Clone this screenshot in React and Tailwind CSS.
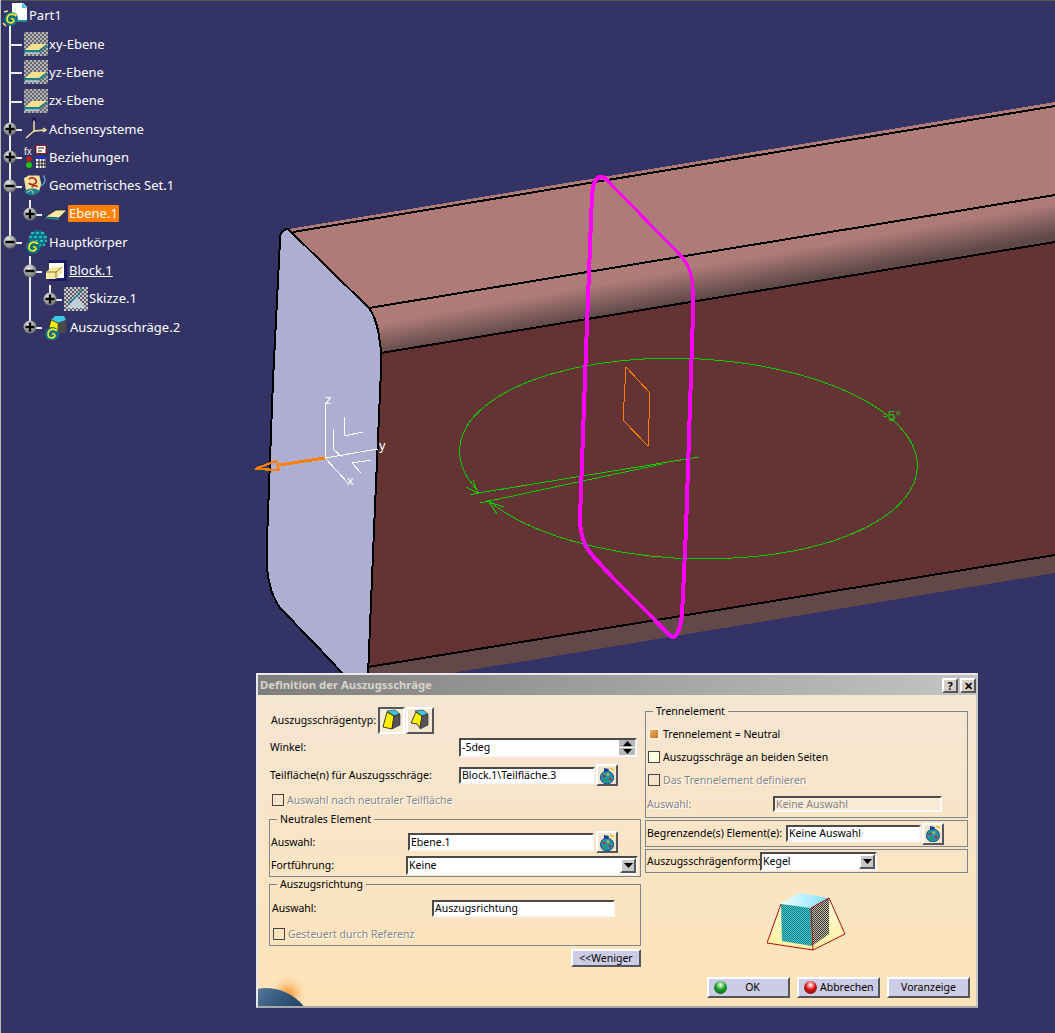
import React from 'react';

const Checker = ({ id, a = '#ffffff', b = '#777777', size = 2 }) => (
  <pattern id={id} width={size * 2} height={size * 2} patternUnits="userSpaceOnUse">
    <rect width={size * 2} height={size * 2} fill={a} />
    <rect width={size} height={size} fill={b} />
    <rect x={size} y={size} width={size} height={size} fill={b} />
  </pattern>
);

const Spiral = ({ x = 0, y = 0 }) => (
  <g transform={`translate(${x} ${y})`}>
    <circle cx="8" cy="8" r="7" fill="#0a6f80" />
    <path d="M8 8 a2 2 0 0 1 3 2 a4 4 0 0 1 -6 1 a5 5 0 0 1 1 -7 a6 6 0 0 1 7 1" fill="none" stroke="#ffee22" strokeWidth="1.6" />
  </g>
);

const Sphere = ({ minus }) => (
  <svg width="14" height="14" viewBox="0 0 14 14" className="absolute left-[3px] top-1/2 -translate-y-1/2">
    <defs>
      <radialGradient id="sph" cx="0.4" cy="0.3" r="0.8">
        <stop offset="0" stopColor="#e8e8e8" />
        <stop offset="1" stopColor="#5c5c5c" />
      </radialGradient>
    </defs>
    <circle cx="7" cy="7" r="6.5" fill="url(#sph)" />
    <rect x="2.5" y="5.8" width="9" height="2.4" fill="#000" />
    {!minus && <rect x="5.8" y="2.5" width="2.4" height="9" fill="#000" />}
  </svg>
);

const PlaneIcon = () => (
  <svg width="24" height="24" viewBox="0 0 24 24">
    <defs><Checker id="chk" a="#b4b4b8" b="#66666e" /></defs>
    <rect width="24" height="24" fill="url(#chk)" />
    <path d="M1 18 L8 12 L23 12 L15 18 Z" fill="#f2e08a" />
    <path d="M0 18 L15 18 L23 12 L23 14 L15 21 L0 21 Z" fill="#1d7f8c" />
    <path d="M1 21 L15 21" stroke="#eee" />
  </svg>
);

const AxisIcon = () => (
  <svg width="22" height="24" viewBox="0 0 22 24" fill="none" stroke="#f5e6a0" strokeWidth="1.5">
    <path d="M9 3 L9 14 L1 21" />
    <path d="M9 14 L20 13" />
    <path d="M7 5 L9 1 L11 5" stroke="#14145a" />
    <path d="M18 11 L21 13 L18 15" stroke="#f5e6a0" />
  </svg>
);

const RelationIcon = () => (
  <svg width="24" height="24" viewBox="0 0 24 24">
    <text x="0" y="10" fontSize="10" fontFamily="Liberation Sans, sans-serif" fill="#eeeeee">fx</text>
    <rect x="12" y="0.5" width="10" height="8" fill="#fff" stroke="#a01010" />
    <path d="M14 3 H20 M14 6 H18" stroke="#222" />
    <circle cx="5" cy="14" r="2.5" fill="#d81818" />
    <circle cx="5" cy="20" r="3" fill="#18c818" />
    <rect x="12" y="11" width="10" height="12" fill="#fff" />
    <rect x="12" y="11" width="10" height="3" fill="#2030c0" />
    <path d="M12 17 H22 M12 20 H22 M15 14 V23 M18 14 V23 M21 14 V23" stroke="#111" />
  </svg>
);

const GeoSetIcon = () => (
  <svg width="26" height="24" viewBox="0 0 26 24">
    <path d="M1 4 L6 1 L17 1 L19 10 L17 17 L10 19 L3 16 Z" fill="#f5e29c" />
    <path d="M6 5 C9 2 14 4 14 8 C12 11 8 11 6 9 M9 13 C11 11 14 11 15 13" fill="none" stroke="#b01818" strokeWidth="1.5" />
    <path d="M1 18 C6 13 13 14 18 17 C15 22 6 24 1 18 Z" fill="#1a7f90" />
    <path d="M4 19 C8 15 12 17 10 20" fill="none" stroke="#f5e29c" />
    <path d="M21 1 C25 6 22 10 19 12" fill="none" stroke="#50b8e8" strokeWidth="1.2" />
  </svg>
);

const SmallPlaneIcon = () => (
  <svg width="24" height="14" viewBox="0 0 24 14">
    <path d="M1 10 L12 3 L23 3 L15 11 Z" fill="#f8e8a8" stroke="#111" strokeWidth="0.7" />
    <path d="M1 10 L15 11 L15 13 L2 12 Z" fill="#1d7f8c" />
  </svg>
);

const BodyIcon = () => (
  <svg width="24" height="25" viewBox="0 0 24 25">
    <circle cx="14" cy="9" r="9" fill="#0a6f80" />
    <path d="M7 3 L21 3 M5 7 L23 7 M6 11 L23 11 M9 15 L21 15" stroke="#39d0e0" strokeWidth="1.6" strokeDasharray="3 2" />
    <Spiral x="1" y="9" />
  </svg>
);

const BlockIcon = () => (
  <svg width="22" height="22" viewBox="0 0 22 22">
    <rect x="4" width="18" height="21" fill="#fff" />
    <rect x="4" width="18" height="3" fill="#1a1a60" />
    <path d="M19 3 H22 V21 H4 V18 H19 Z" fill="#1a1a60" />
    <path d="M1 12 L7 7 L17 7 L17 13 L11 19 L1 19 Z" fill="#f8e8a0" />
    <path d="M1 12 L11 12 L17 7 M11 12 V19" fill="none" stroke="#8a7a30" />
  </svg>
);

const SketchIcon = () => (
  <svg width="24" height="24" viewBox="0 0 24 24">
    <defs><Checker id="chk2" a="#c8c8cc" b="#5c5c68" /></defs>
    <rect width="24" height="24" fill="url(#chk2)" />
    <path d="M3 21 L13 9 L21 21 Z" fill="#c8d8e8" opacity="0.85" />
    <path d="M5 16 C9 12 14 10 18 2" fill="none" stroke="#1d7f8c" strokeWidth="1.6" />
  </svg>
);

const DraftIcon = () => (
  <svg width="24" height="25" viewBox="0 0 24 25">
    <path d="M7 5 L11 1 L20 1 L22 5 L14 8 Z" fill="#39c8e0" />
    <path d="M7 5 L14 8 L14 19 L4 17 Z" fill="#ffee00" stroke="#111" strokeWidth="0.6" />
    <path d="M14 8 L22 5 L22 17 L14 20 Z" fill="#4a4a4a" />
    <Spiral x="0" y="11" />
  </svg>
);

const PartIcon = () => (
  <svg width="26" height="25" viewBox="0 0 26 25">
    <path d="M10 0 L21 0 L25 4 L25 18 L10 18 Z" fill="#fff" />
    <path d="M20 0 L25 5 L20 5 Z" fill="#38c8d8" />
    <path d="M14 18 H25" stroke="#1d8f9c" strokeWidth="2" />
    <circle cx="9" cy="13" r="2" fill="#777" />
    <Spiral x="1" y="8" />
    <path d="M2 9 L6 8 M13 9 L16 12 M1 20 L4 23" stroke="#f5e29c" strokeWidth="1.5" />
  </svg>
);

const Plus = ({ last, minus }) => (
  <div className="relative w-[23px] h-full shrink-0">
    <span className={`absolute left-[9px] top-0 w-[2px] bg-[#eeeeee] ${last ? 'h-1/2' : 'h-full'}`} />
    <span className="absolute left-[9px] right-[1px] top-1/2 h-[2px] bg-[#eeeeee]" />
    {minus !== undefined && <Sphere minus={minus} />}
  </div>
);

const Guide = () => (
  <div className="flex justify-center w-[20px] h-full shrink-0">
    <span className="w-[2px] h-full bg-[#eeeeee]" />
  </div>
);

const Spacer = () => <div className="w-[20px] h-full shrink-0" />;

const rows = [
  { guides: [], Icon: PlaneIcon, label: 'xy-Ebene' },
  { guides: [], Icon: PlaneIcon, label: 'yz-Ebene' },
  { guides: [], Icon: PlaneIcon, label: 'zx-Ebene' },
  { guides: [], minus: false, Icon: AxisIcon, label: 'Achsensysteme' },
  { guides: [], minus: false, Icon: RelationIcon, label: 'Beziehungen' },
  { guides: [], minus: true, Icon: GeoSetIcon, label: 'Geometrisches Set.1' },
  { guides: ['line'], minus: false, last: true, Icon: SmallPlaneIcon, label: 'Ebene.1', selected: true },
  { guides: [], minus: true, last: true, Icon: BodyIcon, label: 'Hauptkörper' },
  { guides: ['none'], minus: true, Icon: BlockIcon, label: 'Block.1', underline: true },
  { guides: ['none', 'line'], minus: false, last: true, Icon: SketchIcon, label: 'Skizze.1' },
  { guides: ['none'], minus: false, last: true, Icon: DraftIcon, label: 'Auszugsschräge.2', shift: true },
];

function Tree() {
  return (
    <div className="relative z-10 w-[220px] text-[13px] leading-none text-white font-['Noto_Sans',sans-serif]">
      <div className="relative flex items-center h-[30px] pl-[2px]">
        <span className="absolute left-[9px] top-[22px] bottom-0 w-[2px] bg-[#eeeeee]" />
        <span className="relative"><PartIcon /></span>
        <span className="ml-[1px]">Part1</span>
      </div>
      {rows.map((r) => (
        <div key={r.label} className="flex items-center h-[28.3px]">
          {r.guides.map((g, i) => (g === 'line' ? <Guide key={i} /> : <Spacer key={i} />))}
          <Plus last={r.last} minus={r.minus} />
          <div className="flex justify-center w-[25px] shrink-0"><r.Icon /></div>
          <span className={`px-[1px] py-[2px] ${r.selected ? 'bg-[#ff8000] rounded-[1px]' : ''} ${r.underline ? 'underline' : ''} ${r.shift ? 'ml-[1px]' : ''}`}>
            {r.label}
          </span>
        </div>
      ))}
    </div>
  );
}

function Scene() {
  return (
    <svg className="absolute left-0 top-0" width="1055" height="1033" viewBox="0 0 1055 1033" shapeRendering="crispEdges">
      <defs>
        <linearGradient id="band" gradientUnits="userSpaceOnUse" x1="700" y1="253" x2="708" y2="298">
          <stop offset="0.3" stopColor="#ae7b78" />
          <stop offset="1" stopColor="#5e4848" />
        </linearGradient>
      </defs>
      <path d="M289 229 L1055 102 L1055 195 L369 308 Z" fill="#ae7b78" />
      <path d="M369 308 L1055 195 L1055 242 L381 353 Z" fill="url(#band)" />
      <path d="M381 353 L1055 242 L1055 555 L368 667 Z" fill="#643333" />
      <path d="M368 667 L1055 555 L1055 573 L368 687 Z" fill="#624848" />
      <path
        d="M288 229 C283 229 280 233 280 240 L273 380 L267 540 C266 560 267 575 270 585 C272 595 276 602 280 608 L316 645 L344 675 L368 675 L374 530 L381 370 C382 345 378 320 369 308 Z"
        fill="#aeaed2"
        stroke="#000"
        strokeWidth="2"
      />
      <g stroke="#000" strokeWidth="2" fill="none">
        <path d="M293 232 L1055 106" />
        <path d="M369 308 L1055 195" />
        <path d="M381 353 L1055 242" />
        <path d="M368 667 L1055 555" />
      </g>
      <g fill="none" stroke="#00cc00" strokeWidth="1">
        <path d="M478 491 A229 100 2.3 1 1 917.3 467.7 A229 100 2.3 0 1 487.7 500 L489 502" />
        <path d="M478 493 L699 457" />
        <path d="M480 503 L662 464" />
        <path d="M466 487 L478 493 L473 480 M470 495 L478 493" />
        <path d="M504 507 L489 502 L497 514" />
      </g>
      <path d="M626 367 L650 393 L648 446 L623 420 Z" fill="none" stroke="#ff8000" />
      <path d="M607 180 L683 258 C689 266 693 278 693 290" fill="none" stroke="#ff00ff" strokeWidth="3" />
      <path d="M693 290 L693 313 L686 530 L682 615 C680 630 676 637 673 637 C670 637 666 632 653 618 L612 577 L592 555 C585 547 580 535 580 518 L586 350 L592 195 C593 182 597 177 601 177 C604 177 606 179 607 180" fill="none" stroke="#ff00ff" strokeWidth="4" />
      <g fill="none" stroke="#ffffff" strokeWidth="1">
        <path d="M325 403 L325 458 L378 449" />
        <path d="M325 458 L348 483" />
        <path d="M344 417 L344 436 L363 432" />
        <path d="M333 429 L333 449 L342 457" />
        <path d="M371 460 L352 463 L361 473" />
      </g>
      <path d="M325 458 L279 465" stroke="#ff8000" strokeWidth="3" />
      <path d="M255 469 L276 461 L279 470 Z" fill="none" stroke="#ff8000" strokeWidth="2.2" />
      <g fontFamily="Liberation Sans, sans-serif" fontSize="13" fill="#ffffff">
        <text x="325" y="404">z</text>
        <text x="379" y="450">y</text>
        <text x="347" y="485">x</text>
      </g>
      <text x="883" y="421" fontFamily="Liberation Sans, sans-serif" fontSize="14" fill="#22bb22">-5°</text>
    </svg>
  );
}

const raised = 'border-2 border-t-white border-l-white border-r-[#55555c] border-b-[#55555c]';
const sunken = 'border-2 border-t-[#4a4a4a] border-l-[#4a4a4a] border-r-[#f8f8f8] border-b-[#f8f8f8]';
const muted = 'text-[#868686] [text-shadow:1px_1px_0_#ffffff]';

const Field = ({ value, className = '', disabled }) => (
  <div className={`${sunken} ${disabled ? 'bg-[#f8ead6] text-[#868686]' : 'bg-white text-black'} flex items-center px-[1px] shrink-0 ${className}`}>
    {value}
  </div>
);

const Tri = ({ up }) => (
  <svg width="9" height="5" viewBox="0 0 9 5"><path d={up ? 'M4.5 0 L9 5 H0 Z' : 'M0 0 H9 L4.5 5 Z'} fill="#000" /></svg>
);

const Select = ({ value, className = '' }) => (
  <div className={`${sunken} flex bg-white items-stretch shrink-0 ${className}`}>
    <span className="flex-1 px-[1px] flex items-center">{value}</span>
    <span className={`${raised} w-[16px] bg-[#c8c8c8] flex items-center justify-center`}><Tri /></span>
  </div>
);

const PickButton = () => (
  <button className={`${raised} w-[22px] h-[22px] bg-[#f5e6d0] flex items-center justify-center shrink-0`}>
    <svg width="16" height="17" viewBox="0 0 16 17">
      <path d="M5 1 L10 2 L9 5 L5 5 Z" fill="#1a3a9a" />
      <path d="M11 1 L15 3" stroke="#f0c020" strokeWidth="1.5" />
      <circle cx="8" cy="10.5" r="6.5" fill="#1c96a8" stroke="#123a80" />
      <circle cx="5" cy="9" r="1.2" fill="#d81818" />
      <circle cx="9" cy="7.5" r="1.2" fill="#f0c020" />
      <circle cx="11" cy="12" r="1.2" fill="#d81818" />
      <circle cx="6.5" cy="13.5" r="1.2" fill="#18a030" />
    </svg>
  </button>
);

const Check = ({ disabled, className = 'border border-[#444]', children }) => (
  <div className="flex items-center h-[14px] whitespace-nowrap">
    <span className={`w-[12px] h-[12px] mr-[3px] shrink-0 ${className}`} />
    <span className={disabled ? muted : ''}>{children}</span>
  </div>
);

const Group = ({ legend, className = '', children }) => (
  <fieldset className={`border border-[#7d868c] ${className}`}>
    <legend className="ml-[7px] px-[3px] h-[14px] leading-[14px]">{legend}</legend>
    {children}
  </fieldset>
);

const DraftTypeIcon = ({ curved }) => (
  <svg width="20" height="22" viewBox="0 0 20 22">
    <path d="M5 2 L13 1 L18 5 L12 7 Z" fill="#39c8e0" stroke="#222" strokeWidth="0.6" />
    <path
      d={curved ? 'M6 3 L12 7 L10 19 L7 15 L1 14 Z' : 'M5 3 L12 7 L10 20 L1 18 Z'}
      fill="#ffee00"
      stroke="#111"
      strokeWidth="0.8"
    />
    <path d="M12 7 L18 5 L18 16 L10 20 Z" fill="#555" stroke="#222" strokeWidth="0.6" />
  </svg>
);

const Ball = ({ color }) => (
  <span
    className="w-[13px] h-[13px] rounded-full shrink-0"
    style={{ background: `radial-gradient(circle at 50% 30%, #ffffff 0, ${color} 45%, #222 120%)` }}
  />
);

const ActionButton = ({ children, className = '' }) => (
  <button className={`${raised} w-[83px] h-[21px] bg-[#ccccE6] text-[10.5px] flex items-center ${className}`}>
    {children}
  </button>
);

function Preview() {
  return (
    <svg width="80" height="60" viewBox="0 0 80 60" className="mx-auto">
      <defs>
        <Checker id="teal" a="#3fc8c8" b="#15808a" size={1} />
        <Checker id="dark" a="#c8c0a8" b="#333333" size={1} />
        <linearGradient id="wing" x1="0" y1="0" x2="0" y2="1">
          <stop offset="0" stopColor="#fffbe0" />
          <stop offset="1" stopColor="#fff0a0" />
        </linearGradient>
        <linearGradient id="topf" x1="0" y1="0" x2="1" y2="0">
          <stop offset="0" stopColor="#f0ffff" />
          <stop offset="1" stopColor="#80e0ff" />
        </linearGradient>
      </defs>
      <path d="M14 11 L0 50 L46 57 L78 41 L62 5 L32 0 Z" fill="url(#wing)" />
      <path d="M14 11 L32 0 L62 5 L44 15 Z" fill="url(#topf)" />
      <path d="M14 11 L44 15 L45 53 L15 48 Z" fill="url(#teal)" />
      <path d="M44 15 L62 5 L62 41 L45 53 Z" fill="url(#dark)" />
      <path d="M14 11 L0 50 L46 57 L78 41 L62 5 L44 15 L46 57" fill="none" stroke="#b01010" strokeWidth="1" />
    </svg>
  );
}

function Dialog() {
  return (
    <div className="absolute left-[256px] top-[673px] z-10 w-[722px] h-[335px] flex flex-col border-2 border-t-[#e8e8e8] border-l-[#e8e8e8] border-r-[#c8c8c8] border-b-[#a8a8a8] text-[10.5px] leading-none text-black overflow-hidden font-['Noto_Sans',sans-serif]">
      <div className="flex items-center justify-between h-[20px] shrink-0 bg-gradient-to-r from-[#7e7e7e] to-[#c4c4c4] pl-[2px]">
        <span className="font-bold text-[11.3px] text-[#d8d4cc]">Definition der Auszugsschräge</span>
        <div className="flex gap-[2px]">
          <button className={`${raised} w-[16px] h-[15px] bg-[#d4d0c8] flex items-center justify-center text-[11px] font-bold`}>?</button>
          <button className={`${raised} w-[16px] h-[15px] bg-[#d4d0c8] flex items-center justify-center text-[11px] font-bold`}>✕</button>
        </div>
      </div>

      <div className="relative flex flex-1 whitespace-nowrap bg-gradient-to-b from-[#f5e6d2] to-[#fde3b8]">
        <span className="absolute left-0 bottom-0 w-[48px] h-[32px] overflow-hidden">
          <svg width="48" height="32" viewBox="0 0 48 32">
            <defs>
              <radialGradient id="glow" gradientUnits="userSpaceOnUse" cx="30" cy="20" r="20">
                <stop offset="0.2" stopColor="#f8a850" />
                <stop offset="1" stopColor="#fde3b8" stopOpacity="0" />
              </radialGradient>
              <linearGradient id="earth" x1="0" y1="0" x2="1" y2="1">
                <stop offset="0" stopColor="#c8d0d8" />
                <stop offset="0.25" stopColor="#4a6f90" />
                <stop offset="0.6" stopColor="#16365a" />
              </linearGradient>
            </defs>
            <rect width="48" height="32" fill="url(#glow)" />
            <circle cx="8" cy="62" r="48" fill="url(#earth)" />
          </svg>
        </span>

        <div className="relative w-[387px] shrink-0 flex flex-col pl-[11px] pr-[4px] pt-[11px]">
          <div className="flex items-center h-[28px] pl-[2px]">
            <span className="w-[107px]">Auszugsschrägentyp:</span>
            <button className="w-[27px] h-[27px] border-2 border-t-[#55555c] border-l-[#55555c] border-r-white border-b-white flex items-center justify-center bg-[#f8ecd8]"><DraftTypeIcon /></button>
            <button className={`${raised} w-[28px] h-[27px] ml-[1px] flex items-center justify-center bg-[#f5e6d2]`}><DraftTypeIcon curved /></button>
          </div>
          <div className="flex items-center h-[19px] mt-[4px] pl-[1px]">
            <span className="w-[189px]">Winkel:</span>
            <div className={`${sunken} flex w-[178px] h-[19px] bg-white`}>
              <span className="flex-1 flex items-center px-[1px]">-5deg</span>
              <span className="flex flex-col w-[16px] gap-[1px] bg-white">
                <span className="flex-1 bg-[#b8b8b8] flex items-center justify-center"><Tri up /></span>
                <span className="flex-1 bg-[#b8b8b8] flex items-center justify-center"><Tri /></span>
              </span>
            </div>
          </div>
          <div className="flex items-center h-[22px] mt-[7px] pl-[1px]">
            <span className="w-[189px]">Teilfläche(n) für Auszugsschräge:</span>
            <Field value="Block.1\Teilfläche.3" className="w-[136px] h-[17px]" />
            <span className="ml-[1px]"><PickButton /></span>
          </div>
          <div className="mt-[7px] pl-[3px]">
            <Check disabled>Auswahl nach neutraler Teilfläche</Check>
          </div>

          <Group legend="Neutrales Element" className="mt-[5px] h-[65px] w-[372px]">
            <div className="flex items-center h-[22px] mt-[5px] pl-[1px]">
              <span className="w-[137px]">Auswahl:</span>
              <Field value="Ebene.1" className="w-[186px] h-[18px]" />
              <span className="ml-[2px]"><PickButton /></span>
            </div>
            <div className="flex items-center h-[19px] mt-[3px] pl-[1px]">
              <span className="w-[135px]">Fortführung:</span>
              <Select value="Keine" className="w-[232px] h-[19px]" />
            </div>
          </Group>

          <Group legend="Auszugsrichtung" className="h-[69px] w-[372px]">
            <div className="flex items-center h-[17px] mt-[9px] pl-[2px]">
              <span className="w-[160px]">Auswahl:</span>
              <Field value="Auszugsrichtung" className="w-[183px] h-[17px]" />
            </div>
            <div className="mt-[10px] pl-[3px]">
              <Check disabled>Gesteuert durch Referenz</Check>
            </div>
          </Group>

          <div className="flex justify-end mt-[3px] w-[372px]">
            <button className={`${raised} w-[70px] h-[18px] bg-[#ccccE6] text-[10.5px]`}>&lt;&lt;Weniger</button>
          </div>
        </div>

        <div className="relative w-[323px] shrink-0 flex flex-col pt-[9px]">
          <Group legend="Trennelement" className="h-[114px]">
            <div className="flex flex-col gap-[9px] mt-[9px] pl-[2px]">
              <Check className="border-2 border-[#fff0d8] bg-[linear-gradient(135deg,#f0b060,#c87020)]">Trennelement = Neutral</Check>
              <Check className="border border-[#444] bg-[#ffffe0]">Auszugsschräge an beiden Seiten</Check>
              <Check disabled>Das Trennelement definieren</Check>
            </div>
            <div className="flex items-center h-[16px] mt-[9px]">
              <span className={`w-[127px] ${muted} pl-[1px]`}>Auswahl:</span>
              <Field value="Keine Auswahl" disabled className="w-[169px] h-[16px]" />
            </div>
          </Group>
          <div className="flex items-center h-[27px] mt-[2px] border border-[#7d868c]">
            <span className="w-[140px] pl-[1px]">Begrenzende(s) Element(e):</span>
            <Field value="Keine Auswahl" className="w-[135px] h-[17px]" />
            <span className="ml-[1px]"><PickButton /></span>
          </div>
          <div className="flex items-center h-[24px] mt-[2px] border border-[#7d868c]">
            <span className="w-[114px] pl-[1px]">Auszugsschrägenform:</span>
            <Select value="Kegel" className="w-[117px] h-[19px]" />
          </div>
          <div className="mt-[20px]"><Preview /></div>
          <div className="flex justify-end gap-[7px] mt-[24px] -mr-[2px]">
            <ActionButton className="pl-[5px]"><Ball color="#10a020" /><span className="flex-1 text-center pr-[10px]">OK</span></ActionButton>
            <ActionButton className="pl-[5px] gap-[3px]"><Ball color="#d81010" /><span>Abbrechen</span></ActionButton>
            <ActionButton className="justify-center">Voranzeige</ActionButton>
          </div>
        </div>
      </div>
    </div>
  );
}

export default function App() {
  return (
    <div className="relative w-[1055px] h-[1033px] overflow-hidden bg-[#333366] shadow-[inset_1px_0_0_#bcbcbc,inset_0_1px_0_#555555]">
      <Scene />
      <Tree />
      <Dialog />
    </div>
  );
}
